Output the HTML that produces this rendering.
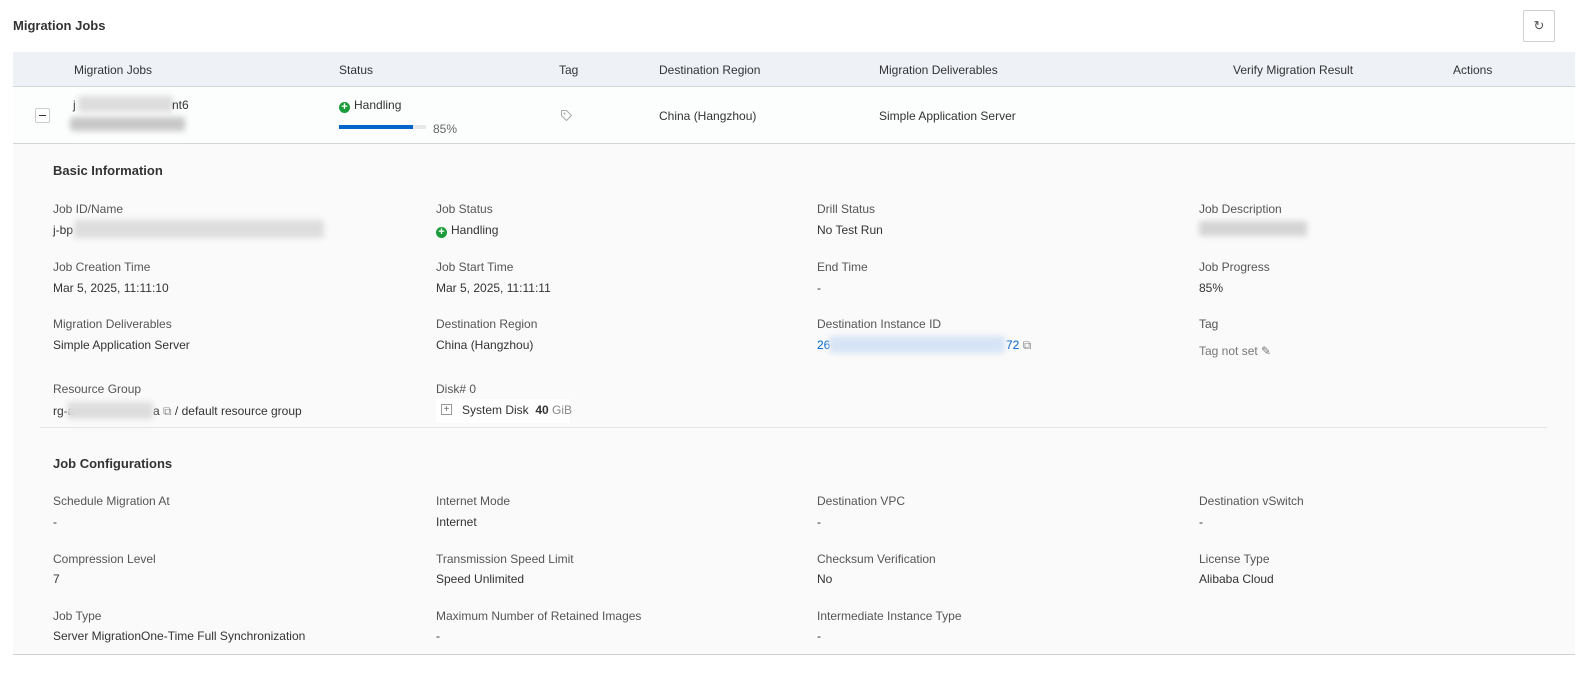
<!DOCTYPE html>
<html><head><meta charset="utf-8"><style>
*{margin:0;padding:0;box-sizing:border-box}
body{width:1588px;height:679px;background:#fff;font-family:"Liberation Sans",sans-serif;font-size:12px;color:#333;position:relative;overflow:hidden}
.a{position:absolute;white-space:nowrap}
.l{color:#555}
.b{font-weight:bold;color:#333}
.blur{position:absolute;background:#d8d8d8;filter:blur(3px);border-radius:3px}
.ok{display:inline-block;width:11px;height:11px;border-radius:50%;background:#1a9c3a;color:#fff;font-size:11px;line-height:11px;text-align:center;font-weight:bold;vertical-align:-1px;margin-right:4px}
</style></head><body>
<div class="a b" style="left:13px;top:18px;font-size:13px">Migration Jobs</div>
<div class="a" style="left:1523px;top:10px;width:32px;height:32px;border:1px solid #d0d0d0;border-radius:2px;text-align:center;line-height:30px;font-size:13px;color:#555">↻</div>

<div class="a" style="left:13px;top:52px;width:1562px;height:35px;background:#eef1f6;border-bottom:1px solid #d6d6d6"></div>
<div class="a" style="left:74px;top:63px">Migration Jobs</div>
<div class="a" style="left:339px;top:63px">Status</div>
<div class="a" style="left:559px;top:63px">Tag</div>
<div class="a" style="left:659px;top:63px">Destination Region</div>
<div class="a" style="left:879px;top:63px">Migration Deliverables</div>
<div class="a" style="left:1233px;top:63px">Verify Migration Result</div>
<div class="a" style="left:1453px;top:63px">Actions</div>

<div class="a" style="left:13px;top:87px;width:1562px;height:57px;background:#fcfdfd;border-bottom:1px solid #d6d6d6"></div>
<div class="a" style="left:35px;top:108px;width:15px;height:15px;border:1px solid #ccc;border-radius:2px;background:#fff"><div style="position:absolute;left:3px;top:6px;width:7px;height:1px;background:#333"></div></div>
<div class="a" style="left:73px;top:98px">j</div>
<div class="blur" style="left:78px;top:96px;width:95px;height:16px;background:#ddd"></div>
<div class="a" style="left:172px;top:98px">nt6</div>
<div class="blur" style="left:70px;top:117px;width:115px;height:14px;background:#c8c8c8"></div>
<div class="a" style="left:339px;top:98px"><span class="ok">+</span>Handling</div>
<div class="a" style="left:339px;top:125px;width:87px;height:4px;background:#e8e8e8"><div style="width:74px;height:4px;background:#0064c8"></div></div>
<div class="a" style="left:433px;top:122px;color:#666">85%</div>
<svg class="a" style="left:560px;top:109px" width="13" height="13" viewBox="0 0 13 13"><path d="M1.5 1.5h5l5 5-5 5-5-5z" fill="none" stroke="#aaa"/><circle cx="4.5" cy="4.5" r="1" fill="#aaa"/></svg>
<div class="a" style="left:659px;top:109px">China (Hangzhou)</div>
<div class="a" style="left:879px;top:109px">Simple Application Server</div>

<div class="a" style="left:13px;top:144px;width:1562px;height:511px;background:#fafafa;border-bottom:1px solid #d0d0d0"></div>
<div class="a" style="left:40px;top:427px;width:1507px;height:1px;background:#e6e6e6"></div>

<div class="a b" style="left:53px;top:163px;font-size:13px">Basic Information</div>
<div class="a l" style="left:53px;top:202px">Job ID/Name</div><div class="a" style="left:53px;top:223px">j-bp</div><div class="blur" style="left:74px;top:220px;width:250px;height:18px;background:#ddd"></div>
<div class="a l" style="left:436px;top:202px">Job Status</div><div class="a" style="left:436px;top:223px"><span class="ok">+</span>Handling</div>
<div class="a l" style="left:817px;top:202px">Drill Status</div><div class="a" style="left:817px;top:223px">No Test Run</div>
<div class="a l" style="left:1199px;top:202px">Job Description</div><div class="blur" style="left:1199px;top:221px;width:108px;height:15px;background:#d4d4d4"></div>

<div class="a l" style="left:53px;top:260px">Job Creation Time</div><div class="a" style="left:53px;top:281px">Mar 5, 2025, 11:11:10</div>
<div class="a l" style="left:436px;top:260px">Job Start Time</div><div class="a" style="left:436px;top:281px">Mar 5, 2025, 11:11:11</div>
<div class="a l" style="left:817px;top:260px">End Time</div><div class="a" style="left:817px;top:281px">-</div>
<div class="a l" style="left:1199px;top:260px">Job Progress</div><div class="a" style="left:1199px;top:281px">85%</div>

<div class="a l" style="left:53px;top:317px">Migration Deliverables</div><div class="a" style="left:53px;top:338px">Simple Application Server</div>
<div class="a l" style="left:436px;top:317px">Destination Region</div><div class="a" style="left:436px;top:338px">China (Hangzhou)</div>
<div class="a l" style="left:817px;top:317px">Destination Instance ID</div><div class="a" style="left:817px;top:338px;color:#0064c8">26</div><div class="a" style="left:1006px;top:338px;color:#0064c8">72 <span style="color:#888">⧉</span></div><div class="blur" style="left:829px;top:336px;width:176px;height:17px;background:#d6e4f5"></div>
<div class="a l" style="left:1199px;top:317px">Tag</div><div class="a" style="left:1199px;top:344px;color:#777">Tag not set ✎</div>

<div class="a l" style="left:53px;top:382px">Resource Group</div><div class="a" style="left:53px;top:404px">rg-a</div><div class="a" style="left:153px;top:404px">a <span style="color:#888">⧉</span> / default resource group</div><div class="blur" style="left:67px;top:402px;width:86px;height:17px;background:#ddd"></div>
<div class="a l" style="left:436px;top:382px">Disk# 0</div>
<div class="a" style="left:436px;top:399px;width:134px;height:24px;background:#fff"></div>
<div class="a" style="left:441px;top:404px;width:11px;height:11px;border:1px solid #999;font-size:10px;line-height:9px;text-align:center;color:#666">+</div>
<div class="a" style="left:462px;top:403px">System Disk&nbsp; <b>40</b> <span style="color:#888">GiB</span></div>

<div class="a b" style="left:53px;top:456px;font-size:13px">Job Configurations</div>
<div class="a l" style="left:53px;top:494px">Schedule Migration At</div><div class="a" style="left:53px;top:515px">-</div>
<div class="a l" style="left:436px;top:494px">Internet Mode</div><div class="a" style="left:436px;top:515px">Internet</div>
<div class="a l" style="left:817px;top:494px">Destination VPC</div><div class="a" style="left:817px;top:515px">-</div>
<div class="a l" style="left:1199px;top:494px">Destination vSwitch</div><div class="a" style="left:1199px;top:515px">-</div>

<div class="a l" style="left:53px;top:552px">Compression Level</div><div class="a" style="left:53px;top:572px">7</div>
<div class="a l" style="left:436px;top:552px">Transmission Speed Limit</div><div class="a" style="left:436px;top:572px">Speed Unlimited</div>
<div class="a l" style="left:817px;top:552px">Checksum Verification</div><div class="a" style="left:817px;top:572px">No</div>
<div class="a l" style="left:1199px;top:552px">License Type</div><div class="a" style="left:1199px;top:572px">Alibaba Cloud</div>

<div class="a l" style="left:53px;top:609px">Job Type</div><div class="a" style="left:53px;top:629px">Server MigrationOne-Time Full Synchronization</div>
<div class="a l" style="left:436px;top:609px">Maximum Number of Retained Images</div><div class="a" style="left:436px;top:629px">-</div>
<div class="a l" style="left:817px;top:609px">Intermediate Instance Type</div><div class="a" style="left:817px;top:629px">-</div>
</body></html>
